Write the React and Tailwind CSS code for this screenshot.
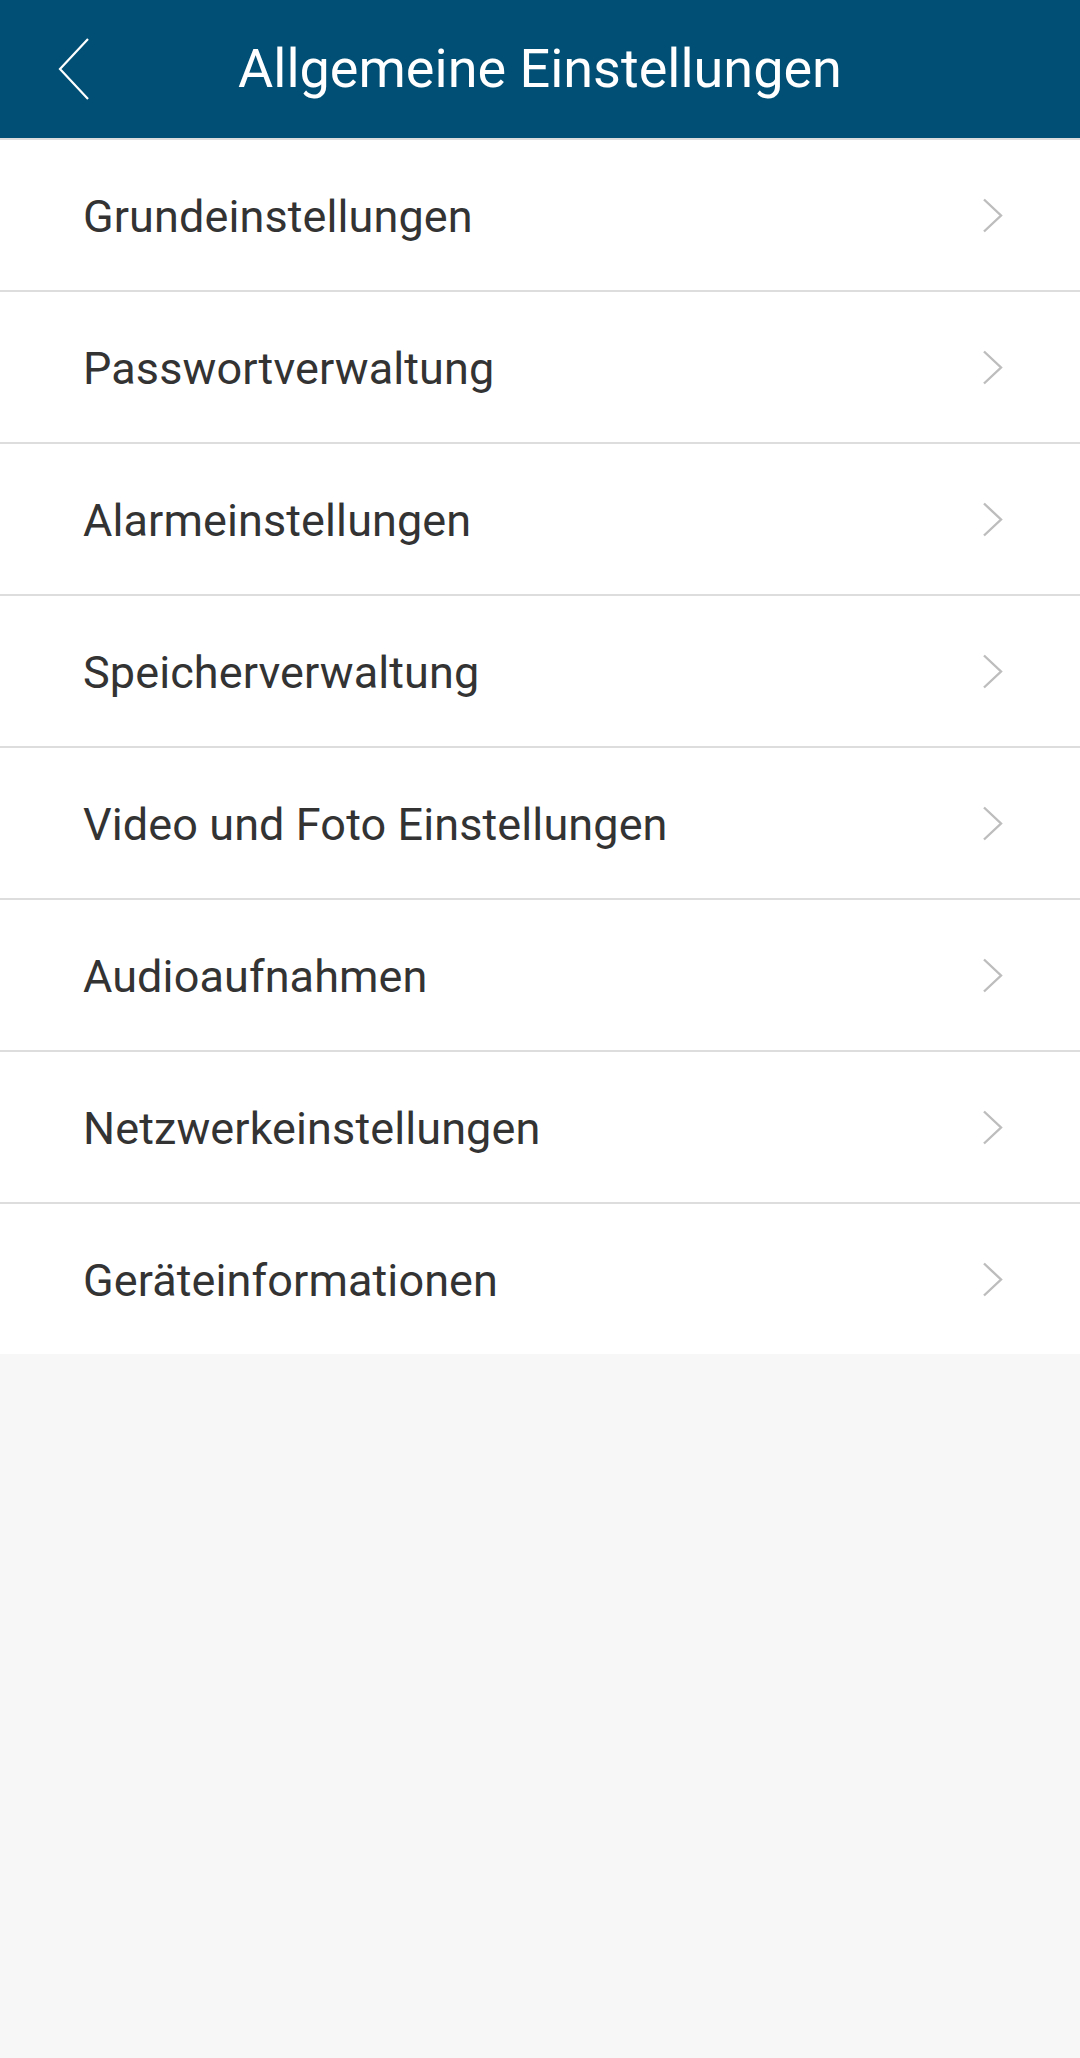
import React from 'react'

const items = [
  'Grundeinstellungen',
  'Passwortverwaltung',
  'Alarmeinstellungen',
  'Speicherverwaltung',
  'Video und Foto Einstellungen',
  'Audioaufnahmen',
  'Netzwerkeinstellungen',
  'Geräteinformationen',
]

function BackIcon() {
  return (
    <svg width="32" height="62" viewBox="0 0 32 62" fill="none">
      <path d="M30 1 L2 31 L30 61" stroke="white" strokeWidth="2.2" />
    </svg>
  )
}

function ChevronRight() {
  return (
    <svg width="22" height="35" viewBox="0 0 22 35" fill="none">
      <path d="M2 1.5 L19 17.5 L2 33.5" stroke="#bdbdbd" strokeWidth="2.4" />
    </svg>
  )
}

export default function App() {
  return (
    <div className="min-h-[2058px] w-[1080px] bg-[#f7f7f7]" style={{ fontFamily: 'Roboto, "Noto Sans", sans-serif' }}>
      <header className="relative h-[138px] bg-[#014f75] flex items-center justify-center">
        <button className="absolute left-[58px] top-[38px]">
          <BackIcon />
        </button>
        <h1 className="text-white text-[54px] leading-none font-normal">Allgemeine Einstellungen</h1>
      </header>
      <ul className="bg-white">
        {items.map(label => (
          <li key={label} className="h-[152px] border-t-2 border-[#dddddd] flex items-center justify-between pl-[83px] pr-[76px]">
            <span className="text-[#333333] text-[45px] tracking-[0.1px] leading-none pt-[2px]">{label}</span>
            <ChevronRight />
          </li>
        ))}
      </ul>
    </div>
  )
}
